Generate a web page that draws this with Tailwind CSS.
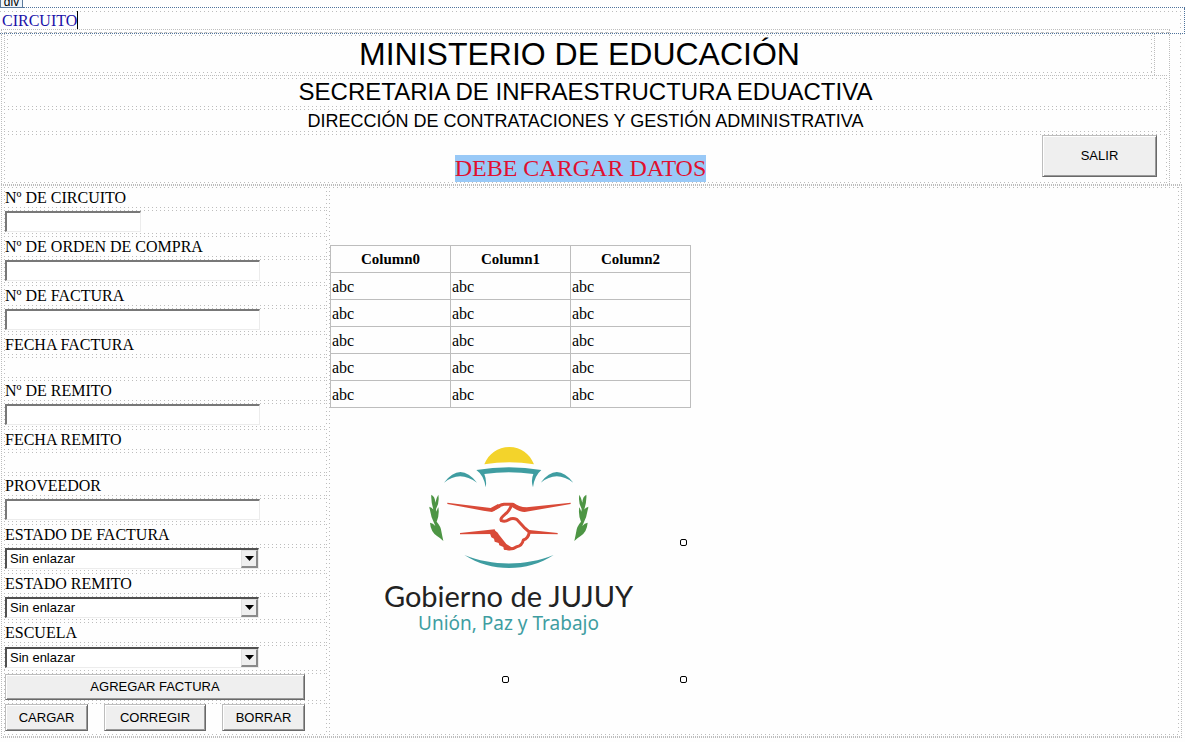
<!DOCTYPE html>
<html lang="es">
<head>
<meta charset="utf-8">
<meta name="viewport" content="width=device-width, initial-scale=1">
<title>Circuito</title>
<script src="https://cdn.jsdelivr.net/npm/@tailwindcss/browser@4"></script>
</head>
<body class="overflow-hidden bg-[#fefefe] font-['Liberation_Serif',serif] text-base leading-[18px] text-black [--d:#bdbdbd] [--h:repeating-linear-gradient(90deg,var(--d)_0_1px,#0000_1px_4px)] [--v:repeating-linear-gradient(180deg,var(--d)_0_1px,#0000_1px_4px)] [--f:repeating-linear-gradient(90deg,#0000_0_1px,var(--d)_1px_2px)]">

<!-- Tag label and edited block -->
<div class="flex h-2 items-end">
  <div class="flex h-2 w-[23px] items-end justify-center overflow-hidden border border-t-0 border-[#5b7a9c] bg-[#eef5fc] font-['Liberation_Sans',sans-serif] text-xs leading-[9px]">div</div>
  <div class="flex-1 border-b border-dotted border-[#4f739c]"></div>
</div>
<div class="border-r border-b border-dotted border-[#4f739c] pt-[3px]">
  <div class="mr-[3px] flex h-[18px] items-start pl-[2px] [background:var(--h)_top/100%_1px_no-repeat,var(--v)_right/1px_100%_no-repeat]">
    <a href="#" class="h-[18px] border-r border-black leading-5 text-[#1a10a8]">CIRCUITO</a>
  </div>
  <div class="mr-[14px] ml-px border-x border-t border-dotted border-[#bdbdbd] pt-[2px] pl-[2px]">
    <div class="h-px border-t border-dashed border-[#bdbdbd]"></div>
  </div>
</div>

<!-- Heading table -->
<header class="mr-1 font-['Liberation_Sans',sans-serif] [background:var(--v)_right/1px_100%_no-repeat]">
  <div class="mr-[11px] ml-px flex flex-col gap-[2px] border-x border-dotted border-[#bdbdbd] px-[2px] pb-px">
    <div class="border-b border-dotted border-[#bdbdbd]">
      <div class="mr-3 border-x border-dotted border-[#bdbdbd] px-[2px] pt-px pb-[2px]">
        <h1 class="h-[38px] text-center text-[32px] leading-[38px] [background:var(--h)_top/100%_1px_no-repeat,var(--h)_bottom/100%_1px_no-repeat,var(--v)_left/1px_100%_no-repeat,var(--v)_right/1px_100%_no-repeat]">MINISTERIO DE EDUCACIÓN</h1>
      </div>
    </div>
    <h2 class="h-[29px] text-center text-2xl leading-[27px] [background:var(--h)_top/100%_1px_no-repeat,var(--h)_bottom/100%_1px_no-repeat,var(--v)_left/1px_100%_no-repeat,var(--v)_right/1px_100%_no-repeat]">SECRETARIA DE INFRAESTRUCTURA EDUACTIVA</h2>
    <h3 class="h-[23px] text-center text-lg leading-[25px] [background:var(--h)_top/100%_1px_no-repeat,var(--h)_bottom/100%_1px_no-repeat,var(--v)_left/1px_100%_no-repeat,var(--v)_right/1px_100%_no-repeat]">DIRECCIÓN DE CONTRATACIONES Y GESTIÓN ADMINISTRATIVA</h3>
    <div class="grid h-[49px] grid-cols-[1fr_auto_1fr] pt-px pr-[10px] [background:var(--h)_top/100%_1px_no-repeat,var(--h)_bottom/100%_1px_no-repeat,var(--v)_left/1px_100%_no-repeat,var(--v)_right/1px_100%_no-repeat]">
      <p class="col-start-2 mb-px self-end bg-[#99c9f7] font-['Liberation_Serif',serif] text-2xl leading-[27px] text-[#e01030]">DEBE CARGAR DATOS</p>
      <button type="button" class="h-[42px] w-[115px] justify-self-end border border-t-[#bdbdbd] border-r-[#696969] border-b-[#696969] border-l-[#bdbdbd] bg-[#efefef] text-[13px] shadow-[inset_1px_1px_#fff,inset_-1px_-1px_#9a9a9a]">SALIR</button>
    </div>
  </div>
</header>

<!-- Form and grid -->
<main class="mr-[3px] ml-px border border-dotted border-[#bdbdbd]">
  <div class="flex gap-[2px] px-[2px] pt-[2px] pb-[2px] [background:var(--f)_top/100%_1px_no-repeat,var(--f)_bottom/100%_1px_no-repeat]">
    <form class="flex w-[323px] shrink-0 flex-col gap-[2px] *:h-[21px] *:pl-px *:[background:var(--h)_top/100%_1px_no-repeat,var(--h)_bottom/100%_1px_no-repeat,var(--v)_left/1px_100%_no-repeat,var(--v)_right/1px_100%_no-repeat]">
      <label for="circuito" class="leading-[21px]">Nº DE CIRCUITO</label>
      <div class="h-6! pt-px"><input id="circuito" type="text" class="block h-[21px] w-[136px] border-t-2 border-r border-b border-l-2 border-t-[#787878] border-r-[#ececec] border-b-[#ececec] border-l-[#787878] bg-white px-1"></div>
      <label for="orden" class="leading-[21px]">Nº DE ORDEN DE COMPRA</label>
      <div class="h-6! pt-px"><input id="orden" type="text" class="block h-[21px] w-[255px] border-t-2 border-r border-b border-l-2 border-t-[#787878] border-r-[#ececec] border-b-[#ececec] border-l-[#787878] bg-white px-1"></div>
      <label for="factura" class="leading-[21px]">Nº DE FACTURA</label>
      <div class="h-6! pt-px"><input id="factura" type="text" class="block h-[21px] w-[255px] border-t-2 border-r border-b border-l-2 border-t-[#787878] border-r-[#ececec] border-b-[#ececec] border-l-[#787878] bg-white px-1"></div>
      <div class="leading-[21px]">FECHA FACTURA</div>
      <div></div>
      <label for="remito" class="leading-[21px]">Nº DE REMITO</label>
      <div class="h-6! pt-px"><input id="remito" type="text" class="block h-[21px] w-[255px] border-t-2 border-r border-b border-l-2 border-t-[#787878] border-r-[#ececec] border-b-[#ececec] border-l-[#787878] bg-white px-1"></div>
      <div class="leading-[21px]">FECHA REMITO</div>
      <div></div>
      <label for="proveedor" class="leading-[21px]">PROVEEDOR</label>
      <div class="h-6! pt-px"><input id="proveedor" type="text" class="block h-[21px] w-[255px] border-t-2 border-r border-b border-l-2 border-t-[#787878] border-r-[#ececec] border-b-[#ececec] border-l-[#787878] bg-white px-1"></div>
      <label for="estado-factura" class="leading-[21px]">ESTADO DE FACTURA</label>
      <div class="h-6! pt-px">
        <div class="relative w-[254px]">
          <select id="estado-factura" class="block h-[21px] w-full appearance-none border-t-2 border-r border-b border-l-2 border-t-[#505050] border-r-[#ececec] border-b-[#ececec] border-l-[#505050] bg-white pl-[3px] font-['Liberation_Sans',sans-serif] text-[13px] leading-[18px]"><option>Sin enlazar</option></select>
          <span class="pointer-events-none absolute top-[2px] right-px flex h-[18px] w-[17px] items-center justify-center border-t border-r-2 border-b-2 border-l border-t-[#e0e0e0] border-r-[#8a8a8a] border-b-[#8a8a8a] border-l-[#e0e0e0] bg-[#efefef]"><svg class="h-[5px] w-[9px]" viewBox="0 0 9 5"><path d="M0 0h9L4.500 5z"/></svg></span>
        </div>
      </div>
      <label for="estado-remito" class="leading-[21px]">ESTADO REMITO</label>
      <div class="h-6! pt-px">
        <div class="relative w-[254px]">
          <select id="estado-remito" class="block h-[21px] w-full appearance-none border-t-2 border-r border-b border-l-2 border-t-[#505050] border-r-[#ececec] border-b-[#ececec] border-l-[#505050] bg-white pl-[3px] font-['Liberation_Sans',sans-serif] text-[13px] leading-[18px]"><option>Sin enlazar</option></select>
          <span class="pointer-events-none absolute top-[2px] right-px flex h-[18px] w-[17px] items-center justify-center border-t border-r-2 border-b-2 border-l border-t-[#e0e0e0] border-r-[#8a8a8a] border-b-[#8a8a8a] border-l-[#e0e0e0] bg-[#efefef]"><svg class="h-[5px] w-[9px]" viewBox="0 0 9 5"><path d="M0 0h9L4.500 5z"/></svg></span>
        </div>
      </div>
      <label for="escuela" class="leading-[21px]">ESCUELA</label>
      <div class="h-[26px]! pt-[2px]">
        <div class="relative w-[254px]">
          <select id="escuela" class="block h-[21px] w-full appearance-none border-t-2 border-r border-b border-l-2 border-t-[#505050] border-r-[#ececec] border-b-[#ececec] border-l-[#505050] bg-white pl-[3px] font-['Liberation_Sans',sans-serif] text-[13px] leading-[18px]"><option>Sin enlazar</option></select>
          <span class="pointer-events-none absolute top-[2px] right-px flex h-[18px] w-[17px] items-center justify-center border-t border-r-2 border-b-2 border-l border-t-[#e0e0e0] border-r-[#8a8a8a] border-b-[#8a8a8a] border-l-[#e0e0e0] bg-[#efefef]"><svg class="h-[5px] w-[9px]" viewBox="0 0 9 5"><path d="M0 0h9L4.500 5z"/></svg></span>
        </div>
      </div>
      <div class="h-7! pt-px">
        <button type="button" class="block h-[26px] w-[300px] border border-t-[#bdbdbd] border-r-[#696969] border-b-[#696969] border-l-[#bdbdbd] bg-[#efefef] font-['Liberation_Sans',sans-serif] text-[13px] shadow-[inset_1px_1px_#fff,inset_-1px_-1px_#9a9a9a]">AGREGAR FACTURA</button>
      </div>
      <div class="flex h-8! gap-4 pt-px font-['Liberation_Sans',sans-serif] text-[13px] *:h-[27px] *:border *:border-t-[#bdbdbd] *:border-r-[#696969] *:border-b-[#696969] *:border-l-[#bdbdbd] *:bg-[#efefef] *:shadow-[inset_1px_1px_#fff,inset_-1px_-1px_#9a9a9a]">
        <button type="button" class="w-[83px]">CARGAR</button>
        <button type="button" class="w-[102px]">CORREGIR</button>
        <button type="button" class="w-[83px]">BORRAR</button>
      </div>
    </form>

    <section class="flex-1 pt-[58px] pl-px [background:var(--h)_top/100%_1px_no-repeat,var(--h)_bottom/100%_1px_no-repeat,var(--v)_left/1px_100%_no-repeat,var(--v)_right/1px_100%_no-repeat]">
      <table class="w-[361px] table-fixed border-collapse border border-[#a0a0a0] text-left [&_td]:h-[27px] [&_td]:border [&_td]:border-[#bdbdbd] [&_td]:pt-[2px] [&_td]:pl-px [&_th]:h-[27px] [&_th]:border [&_th]:border-[#bdbdbd] [&_th]:text-center [&_th]:text-[15px]">
        <thead><tr><th>Column0</th><th>Column1</th><th>Column2</th></tr></thead>
        <tbody>
          <tr><td>abc</td><td>abc</td><td>abc</td></tr>
          <tr><td>abc</td><td>abc</td><td>abc</td></tr>
          <tr><td>abc</td><td>abc</td><td>abc</td></tr>
          <tr><td>abc</td><td>abc</td><td>abc</td></tr>
          <tr><td>abc</td><td>abc</td><td>abc</td></tr>
        </tbody>
      </table>

      <!-- Selected logo with its resize handles -->
      <figure class="relative flex h-[275px] w-[357px] flex-col items-center pt-[22px]">
        <svg class="h-[150px] w-[280px] shrink-0" viewBox="-3 0 840 450" role="img" aria-label="Escudo">
          <path fill="#f3d32b" d="M343 103C356 71 383 51 418 51s61 20 74 52q-74-12-149 0z"/>
          <g fill="#3f9da1">
            <path d="M319 120q98-17 195 0-21 18-25 52-7-21 1-40-74-10-147 0 8 20 4 40-5-36-28-52z"/>
            <path d="M222 158q49-64 99 0-52-39-99 0zM512 158q48-64 98 0-50-39-98 0z"/>
            <path d="M283 375c84 34 183 34 268 0-79 52-188 52-268 0z"/>
          </g>
          <g fill="#d94a38">
            <path d="M232 218L362 234 384 222 392 232 366 246 340 242 232 222zM602 218L470 232Q446 230 430 218L422 228Q446 246 464 246L602 222zM270 309L374 298 380 312 270 313zM563 309L478 300 474 311 563 313z"/>
            <path d="M357 302Q378 296 387 314L409 342 428 354 418 361 402 359 400 351 388 346 386 339 374 335 372 326 364 322z"/>
          </g>
          <g fill="none" stroke="#d94a38" stroke-width="9" stroke-linejoin="round" stroke-linecap="round">
            <path d="M370 239Q388 225 402 223H428Q442 236 462 239"/>
            <path d="M424 227Q416 246 405 253 389 266 394 272 406 276 416 269 428 262 440 268L462 292 478 306Q475 326 460 330 456 348 440 350 426 360 406 355"/>
          </g>
          <g fill="#4d9544">
            <path id="leaf" d="M220 333q-9-9-19-15-19-13-21-40 9 1 16 10-15-29-18-58 12 3 14 15-10-30-8-51 11 5 12 24 3-15 9-24 4 26-7 43l1 8q5-13 6-13 4 22-5 43 13 15 14 29 3 16 6 29z"/>
            <use href="#leaf" transform="matrix(-1 0 0 1 833 0)"/>
          </g>
        </svg>
        <p class="font-[Lato,sans-serif] text-[29px] leading-8 whitespace-nowrap text-[#222]">Gobierno de JUJUY</p>
        <p class="font-['Noto_Sans',sans-serif] text-[19px] leading-[22px] whitespace-nowrap text-[#3f9da1]">Unión, Paz y Trabajo</p>
        <span class="absolute top-[131px] right-0 size-[7px] rounded-xs border border-black bg-white"></span>
        <span class="absolute right-0 bottom-0 size-[7px] rounded-xs border border-black bg-white"></span>
        <span class="absolute bottom-0 left-[172px] size-[7px] rounded-xs border border-black bg-white"></span>
      </figure>
    </section>
  </div>
</main>
</body>
</html>
